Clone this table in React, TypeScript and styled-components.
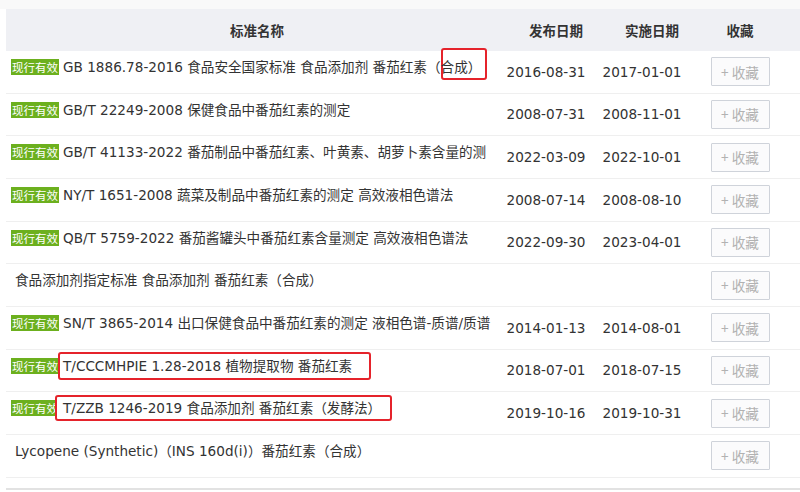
import React from 'react';
import styled, { createGlobalStyle } from 'styled-components';

interface IStandard {
  name: string;
  valid: boolean;
  published?: string;
  effective?: string;
}

const standards: IStandard[] = [
  { valid: true, name: 'GB 1886.78-2016 食品安全国家标准 食品添加剂 番茄红素（合成）', published: '2016-08-31', effective: '2017-01-01' },
  { valid: true, name: 'GB/T 22249-2008 保健食品中番茄红素的测定', published: '2008-07-31', effective: '2008-11-01' },
  { valid: true, name: 'GB/T 41133-2022 番茄制品中番茄红素、叶黄素、胡萝卜素含量的测定', published: '2022-03-09', effective: '2022-10-01' },
  { valid: true, name: 'NY/T 1651-2008 蔬菜及制品中番茄红素的测定 高效液相色谱法', published: '2008-07-14', effective: '2008-08-10' },
  { valid: true, name: 'QB/T 5759-2022 番茄酱罐头中番茄红素含量测定 高效液相色谱法', published: '2022-09-30', effective: '2023-04-01' },
  { valid: false, name: '食品添加剂指定标准 食品添加剂 番茄红素（合成）' },
  { valid: true, name: 'SN/T 3865-2014 出口保健食品中番茄红素的测定 液相色谱-质谱/质谱法', published: '2014-01-13', effective: '2014-08-01' },
  { valid: true, name: 'T/CCCMHPIE 1.28-2018 植物提取物 番茄红素', published: '2018-07-01', effective: '2018-07-15' },
  { valid: true, name: 'T/ZZB 1246-2019 食品添加剂 番茄红素（发酵法）', published: '2019-10-16', effective: '2019-10-31' },
  { valid: false, name: 'Lycopene (Synthetic)（INS 160d(i)）番茄红素（合成）' },
];

/** red annotation boxes drawn over the screenshot */
const marks = [
  { x: 441, y: 48, w: 46, h: 32 },
  { x: 58, y: 352, w: 313, h: 28 },
  { x: 55, y: 395, w: 337, h: 26 },
];

const GlobalStyle = createGlobalStyle`
  body {
    margin: 0;
    background: #fff;
    font-family: "DejaVu Sans", "Noto Sans CJK SC", sans-serif;
  }
`;

const Page = styled.div`
  position: relative;
  width: 800px;
  height: 492px;
  overflow: hidden;
  background: #fff;
`;

const TopStrip = styled.div`
  height: 9px;
  background: #f9f9f9;
`;

const Table = styled.div`
  margin-left: 6px;
`;

const HeaderRow = styled.div`
  display: grid;
  grid-template-columns: 502px 96px 96px 80px;
  height: 42px;
  align-items: center;
  background: #eff0f4;
  color: #333;
  font-size: 13.5px;
  font-weight: bold;
`;

const HeadCell = styled.div`
  text-align: center;
`;

const Row = styled.div`
  display: grid;
  grid-template-columns: 502px 96px 96px 80px;
  height: 42.67px;
  box-sizing: border-box;
  align-items: center;
  border-bottom: 1px solid #efefef;
`;

const NameCell = styled.div`
  align-self: start;
  padding: 6px 11px 0 5px;
`;

const NameText = styled.div<{ $indent: number }>`
  height: 20px;
  line-height: 20px;
  overflow: hidden;
  padding-left: ${(p) => p.$indent}px;
  font-size: 13.6px;
  color: #333;
`;

const Badge = styled.span`
  display: inline-block;
  vertical-align: top;
  margin: 2px 4px 0 0;
  height: 16px;
  line-height: 16px;
  padding: 0 1px;
  background: #6cb01e;
  color: #fff;
  font-size: 11.5px;
  font-family: "Noto Sans CJK SC", sans-serif;
`;

const Title = styled.span`
  position: relative;
  z-index: 2;
`;

const DateCell = styled.div`
  display: flex;
  justify-content: center;
  padding-right: 20px;
  white-space: nowrap;
  font-size: 13.6px;
  color: #333;
`;

const CollectCell = styled.div`
  display: flex;
  justify-content: center;
`;

const CollectButton = styled.button`
  width: 59px;
  height: 29px;
  box-sizing: border-box;
  padding: 0;
  border: 1px solid #cfd3da;
  border-radius: 1px;
  background: #fbfbfc;
  color: #b2b2b2;
  font-size: 13.6px;
  font-family: "Noto Sans CJK SC", sans-serif;
  cursor: pointer;
`;

const FooterLine = styled.div`
  margin-top: 10px;
  border-top: 2px solid #e2e2e2;
`;

const Mark = styled.div<{ $x: number; $y: number; $w: number; $h: number }>`
  position: absolute;
  left: ${(p) => p.$x}px;
  top: ${(p) => p.$y}px;
  width: ${(p) => p.$w}px;
  height: ${(p) => p.$h}px;
  box-sizing: border-box;
  border: 2px solid #e5232b;
  border-radius: 3px;
  background: #fff;
  z-index: 1;
`;

const App = () => {
  return (
    <Page lang="zh-CN">
      <GlobalStyle />
      <TopStrip />
      <Table>
        <HeaderRow>
          <HeadCell>标准名称</HeadCell>
          <HeadCell>发布日期</HeadCell>
          <HeadCell>实施日期</HeadCell>
          <HeadCell>收藏</HeadCell>
        </HeaderRow>
        {standards.map((s) => (
          <Row key={s.name}>
            <NameCell>
              <NameText $indent={s.valid ? 0 : 4}>
                {s.valid && <Badge>现行有效</Badge>}
                <Title>{s.name}</Title>
              </NameText>
            </NameCell>
            <DateCell>{s.published}</DateCell>
            <DateCell>{s.effective}</DateCell>
            <CollectCell>
              <CollectButton>+ 收藏</CollectButton>
            </CollectCell>
          </Row>
        ))}
        <FooterLine />
      </Table>
      {marks.map((m) => (
        <Mark key={m.y} $x={m.x} $y={m.y} $w={m.w} $h={m.h} />
      ))}
    </Page>
  );
};

export default App;
